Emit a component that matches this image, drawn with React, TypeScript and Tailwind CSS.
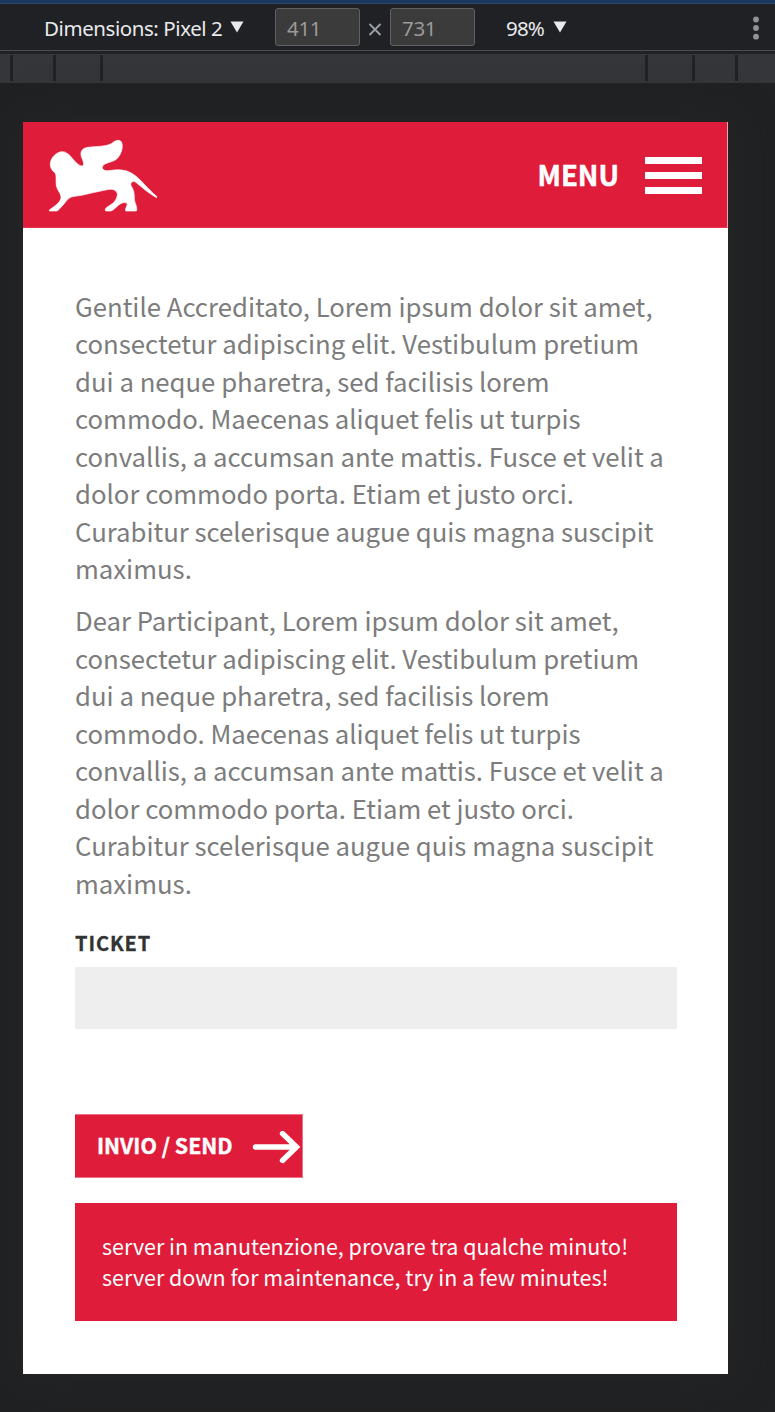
const page = `font-['Noto_Sans_CJK_SC',sans-serif]`;

const bodyLines = [
  'consectetur adipiscing elit. Vestibulum pretium',
  'dui a neque pharetra, sed facilisis lorem',
  'commodo. Maecenas aliquet felis ut turpis',
  'convallis, a accumsan ante mattis. Fusce et velit a',
  'dolor commodo porta. Etiam et justo orci.',
  'Curabitur scelerisque augue quis magna suscipit',
  'maximus.',
];

function Caret() {
  return (
    <svg width="14" height="12" viewBox="0 0 14 12" className="shrink-0 fill-[#e8eaed]">
      <path d="M0.5 0.5h13L7 11.5z" />
    </svg>
  );
}

function SizeField({ value }: { value: string }) {
  return (
    <div className="flex h-[38px] w-[85px] items-center rounded-[3px] border border-[#5f6063] bg-[#3b3b3b] pt-[3px] pl-[11px] text-[20.5px] leading-none tracking-[-0.3px] text-[#9a9a9a]">
      {value}
    </div>
  );
}

function Toolbar() {
  return (
    <div className="flex h-[47px] items-start border-b border-[#4b4c4f] bg-[#202124] pt-[4px] font-['Noto_Sans',sans-serif] text-[20.5px] text-[#e8eaed]">
      <div className="ml-11 flex h-[38px] w-[231px] items-center">
        <span className="w-[186px] pt-[3px] whitespace-nowrap tracking-[-0.43px]">Dimensions: Pixel 2</span>
        <Caret />
      </div>
      <SizeField value="411" />
      <svg width="30" height="38" viewBox="0 0 30 38" className="shrink-0 stroke-[#9aa0a6]" strokeWidth="1.9">
        <path d="M9.5 16l11 11M20.5 16l-11 11" />
      </svg>
      <SizeField value="731" />
      <div className="ml-[31px] flex h-[38px] items-center">
        <span className="w-[47px] pt-[3px] whitespace-nowrap tracking-[-0.8px]">98%</span>
        <Caret />
      </div>
      <svg width="8" height="38" viewBox="0 0 8 38" className="mr-[15px] ml-auto fill-[#929292]">
        <circle cx="4" cy="11.5" r="2.9" />
        <circle cx="4" cy="20" r="2.9" />
        <circle cx="4" cy="28.7" r="2.9" />
      </svg>
    </div>
  );
}

function Ruler() {
  return (
    <div className="mt-[3px] flex h-[29px] bg-[#35363a] pt-px pb-[2px]">
      <i className="ml-[10px] w-[3px] bg-[#202124]" />
      <i className="ml-[40px] w-[3px] bg-[#202124]" />
      <i className="ml-[44px] w-[3px] bg-[#202124]" />
      <i className="ml-[542px] w-[3px] bg-[#202124]" />
      <i className="ml-[44px] w-[3px] bg-[#202124]" />
      <i className="ml-[40px] w-[3px] bg-[#202124]" />
    </div>
  );
}

function Lion() {
  return (
    <svg width="110" height="74" viewBox="0 -2 330 222" className="mt-px fill-white stroke-white" strokeWidth="2" strokeLinejoin="round">
      <path d="M1 214L8 209C26 196 36 187 36 175C36 164 25 156 22 141C20 126 23 114 19 103C8 96 1 82 5 69C8 56 20 42 37 39C49 38 58 45 66 54C77 68 90 83 101 82C107 77 102 66 97 54C93 39 99 29 116 26C145 22 172 25 190 13C200 4 216 0 219 15C222 29 216 49 202 62C185 73 161 73 160 86C160 96 172 98 187 95C211 91 235 94 253 107C275 121 295 150 324 174L323 177C305 168 282 149 263 133C254 125 243 128 246 141C255 153 256 166 256 180C257 195 267 206 262 217H230C228 210 234 203 235 196C231 189 219 191 209 199C200 207 194 214 186 217H170C165 209 177 204 187 197C198 190 206 176 205 165C201 151 186 150 170 154C137 160 104 170 77 173C62 174 56 182 48 192C38 204 31 212 24 217H1Z" />
    </svg>
  );
}

function SiteHeader() {
  return (
    <header className="flex h-[106px] items-center border-r border-b border-r-[#f3a5b1] border-b-[#e23a54] bg-[#df1c3a] pr-[25px] pl-[26px]">
      <Lion />
      <span className="ml-auto text-[27.5px] leading-none font-bold text-white [-webkit-text-stroke:0.5px_white]">MENU</span>
      <div className="ml-[26px] flex w-[57px] flex-col gap-[8px] pt-px">
        <i className="h-[7px] bg-white" />
        <i className="h-[7px] bg-white" />
        <i className="h-[7px] bg-white" />
      </div>
    </header>
  );
}

function Paragraph({ first }: { first: string }) {
  return (
    <p className="mb-[15px] text-[25.73px] leading-[37.45px] whitespace-nowrap text-[#7c7c7c]">
      {[first, ...bodyLines].map((line) => (
        <span key={line} className="block">{line}</span>
      ))}
    </p>
  );
}

export default function App() {
  return (
    <div className={`h-[1412px] w-[775px] overflow-hidden bg-[#202122] ${page}`}>
      <div className="h-[4px] border-b border-[#29496f] bg-[#1b365f]" />
      <Toolbar />
      <Ruler />
      <div className="mt-[39px] ml-[23px] h-[1252px] w-[705px] bg-white shadow-[0_0_40px_#262728]">
        <SiteHeader />
        <main className="px-[52px] pt-[58.8px]">
          <Paragraph first="Gentile Accreditato, Lorem ipsum dolor sit amet," />
          <Paragraph first="Dear Participant, Lorem ipsum dolor sit amet," />
          <label className="block h-[44px] pt-[10px] text-[20px] leading-[34px] font-bold tracking-[0.9px] text-[#333] [-webkit-text-stroke:0.3px_#333]">TICKET</label>
          <input aria-label="Ticket" className="mt-[7.4px] block h-[62px] w-[602px] bg-[#eee]" />
          <button className="mt-[85px] flex h-[64px] w-[228px] items-center border-t border-r border-b border-[#ec7386] bg-[#df1c3a] pl-[22px] text-left text-[21.4px] font-bold text-white">
            <span className="w-[155px] pb-[2px] whitespace-nowrap [-webkit-text-stroke:0.4px_white]">INVIO / SEND</span>
            <svg width="50" height="40" viewBox="0 0 50 40" className="shrink-0 fill-none stroke-white" strokeWidth="5.4" strokeLinecap="round">
              <path d="M3.5 21h40M30.5 7.5l14 13.5l-14 13.5" />
            </svg>
          </button>
          <div className="mt-[25px] h-[118px] w-[602px] bg-[#df1c3a] pt-[27px] pl-[27px] text-[21.48px] leading-[31px] whitespace-nowrap text-white">
            <p>server in manutenzione, provare tra qualche minuto!</p>
            <p>server down for maintenance, try in a few minutes!</p>
          </div>
        </main>
      </div>
    </div>
  );
}
